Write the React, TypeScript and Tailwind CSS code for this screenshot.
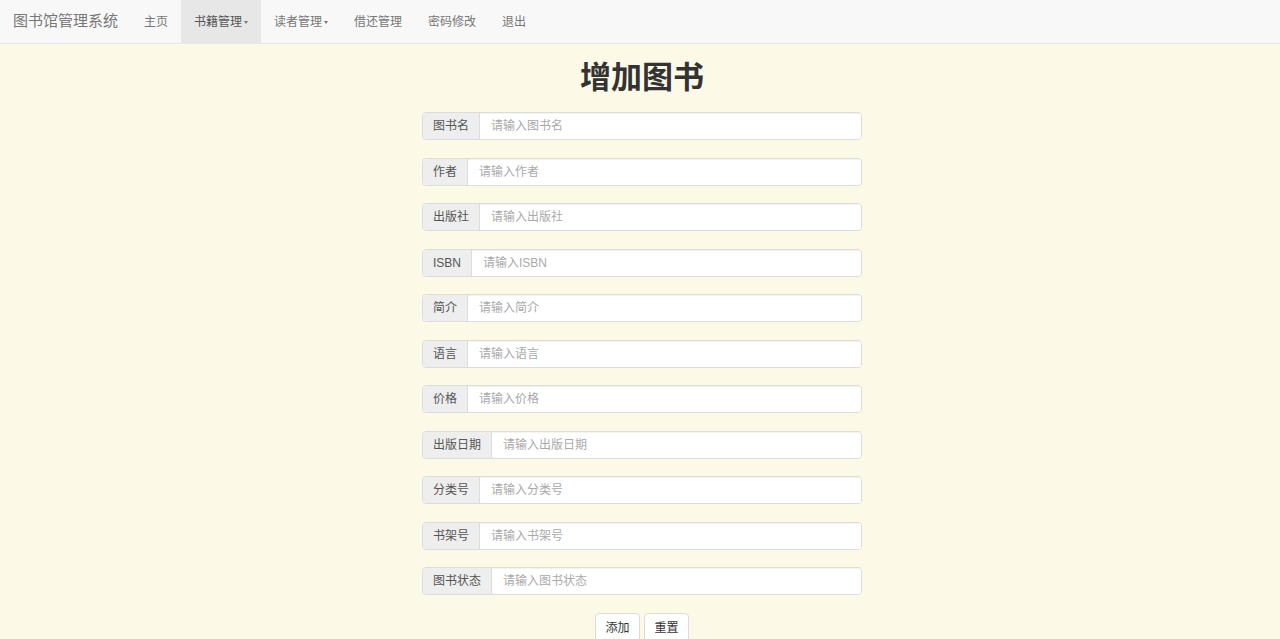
import React from "react";

const fields: [string, string][] = [
  ["图书名", "请输入图书名"],
  ["作者", "请输入作者"],
  ["出版社", "请输入出版社"],
  ["ISBN", "请输入ISBN"],
  ["简介", "请输入简介"],
  ["语言", "请输入语言"],
  ["价格", "请输入价格"],
  ["出版日期", "请输入出版日期"],
  ["分类号", "请输入分类号"],
  ["书架号", "请输入书架号"],
  ["图书状态", "请输入图书状态"],
];

const font = { fontFamily: '"Liberation Sans", "Noto Sans CJK SC", sans-serif' };

function Caret() {
  return (
    <span className="ml-[2px] inline-block w-0 h-0 border-l-[2px] border-r-[2px] border-t-[3px] border-l-transparent border-r-transparent border-t-[#777] align-middle" />
  );
}

export default function App() {
  const links: { t: string; caret?: boolean; active?: boolean }[] = [
    { t: "主页" },
    { t: "书籍管理", caret: true, active: true },
    { t: "读者管理", caret: true },
    { t: "借还管理" },
    { t: "密码修改" },
    { t: "退出" },
  ];
  return (
    <div className="min-h-[639px] h-[639px] overflow-hidden bg-[#fdf9e7]" style={font}>
      <nav className="h-[44px] bg-[#f8f8f8] border-b border-[#e7e7e7] flex items-stretch">
        <div className="flex items-center pl-[13px] pr-[13px] text-[15px] text-[#777]">图书馆管理系统</div>
        {links.map((l) => (
          <div
            key={l.t}
            className={
              "flex items-center px-[13px] pt-[1px] text-[12px] " + (l.active ? "bg-[#e7e7e7] text-[#555]" : "text-[#777]")
            }
          >
            {l.t}
            {l.caret && <Caret />}
          </div>
        ))}
      </nav>
      <main className="flex flex-col items-center pl-[4px]">
        <h1 className="mt-[17px] mb-[18px] text-[31px] leading-[33px] font-bold text-[#333]">增加图书</h1>
        <div className="w-[440px] flex flex-col gap-[17.5px]">
          {fields.map(([label, ph]) => (
            <div key={label} className="flex h-[28px] rounded-[4px] border border-[#dcdcdc] overflow-hidden">
              <div className="flex items-center px-[10px] bg-[#eee] border-r border-[#dcdcdc] text-[12px] text-[#555] whitespace-nowrap">
                {label}
              </div>
              <input
                className="flex-1 bg-white px-[11px] text-[12px] text-[#555] placeholder:text-[#aaa] outline-none shadow-[inset_0_1px_1px_rgba(0,0,0,0.05)]"
                placeholder={ph}
              />
            </div>
          ))}
        </div>
        <div className="mt-[18px] flex gap-[4px]">
          <button className="w-[45px] h-[30px] rounded-[4px] border border-[#dcdcdc] bg-white text-[12px] text-[#333]">添加</button>
          <button className="w-[45px] h-[30px] rounded-[4px] border border-[#dcdcdc] bg-white text-[12px] text-[#333]">重置</button>
        </div>
      </main>
    </div>
  );
}
